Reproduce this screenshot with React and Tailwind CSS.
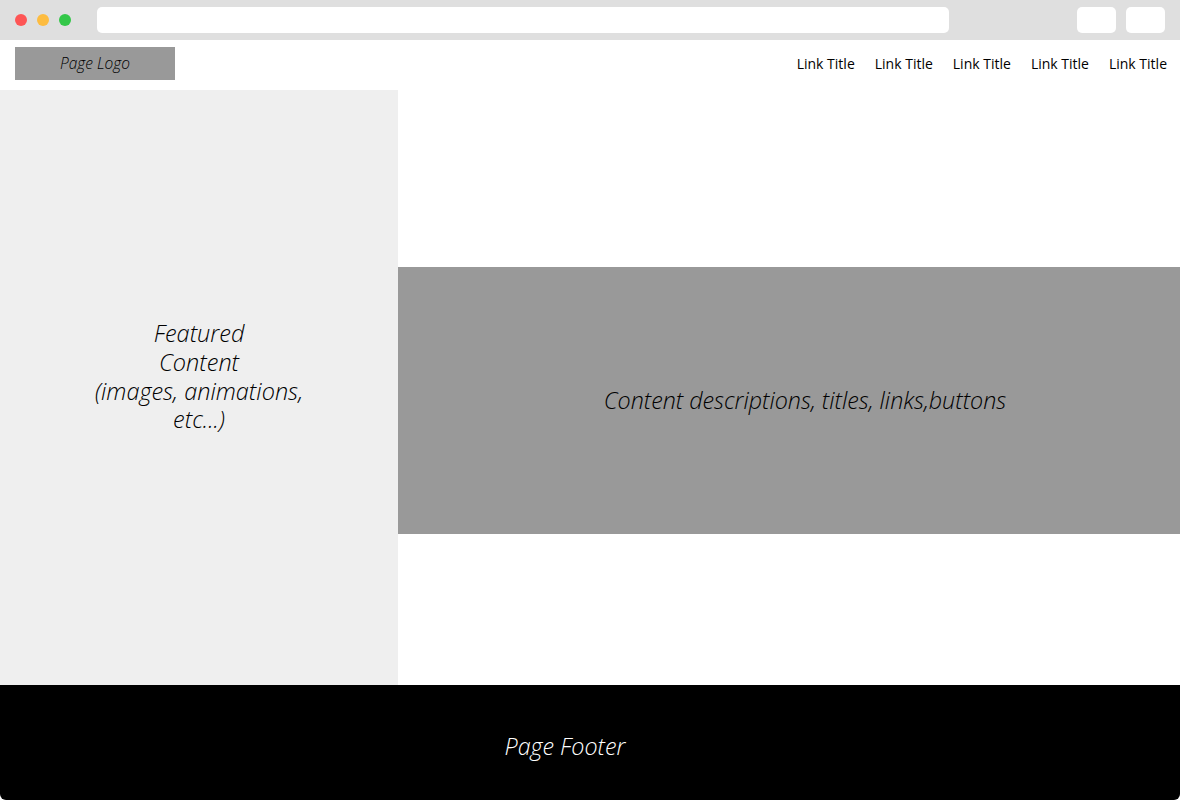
export default function App() {
    const links = ['Link Title', 'Link Title', 'Link Title', 'Link Title', 'Link Title'];

    return (
        <div className="w-[1180px] h-[800px] bg-white flex flex-col overflow-hidden rounded-b-[6px]" style={{ fontFamily: '"Open Sans", sans-serif' }}>
            {/* Browser chrome */}
            <div className="h-[40px] shrink-0 bg-[#dfdfdf] flex items-center">
                <div className="flex items-center gap-[10px] pl-[15px]">
                    <span className="w-[12px] h-[12px] rounded-full bg-[#fe5555]" />
                    <span className="w-[12px] h-[12px] rounded-full bg-[#fdbc40]" />
                    <span className="w-[12px] h-[12px] rounded-full bg-[#33c748]" />
                </div>
                <div className="ml-[26px] w-[852px] h-[26px] rounded-[5px] bg-white" />
                <div className="ml-auto flex gap-[10px] pr-[15px]">
                    <div className="w-[39px] h-[26px] rounded-[5px] bg-white" />
                    <div className="w-[39px] h-[26px] rounded-[5px] bg-white" />
                </div>
            </div>

            {/* Nav */}
            <div className="h-[50px] shrink-0 flex items-start pt-[7px] pl-[15px] pr-[13px]">
                <div className="w-[160px] h-[33px] bg-[#999999] flex items-center justify-center text-[15.5px] font-light italic text-black">
                    Page Logo
                </div>
                <nav className="ml-auto flex gap-[20px] h-[33px] items-center text-[14px] text-black">
                    {links.map((l, i) => (
                        <a key={i} href="#" className="leading-none">{l}</a>
                    ))}
                </nav>
            </div>

            {/* Main */}
            <div className="h-[595px] shrink-0 flex">
                <div className="w-[398px] bg-[#efefef] flex items-center justify-center pb-[22px]">
                    <p className="text-center text-[23.5px] leading-[28.7px] font-light italic text-black w-[240px]">
                        Featured<br />Content<br />(images, animations, etc...)
                    </p>
                </div>
                <div className="flex-1 flex flex-col justify-center pt-[26px]">
                    <div className="h-[267px] bg-[#999999] flex items-center justify-center pl-[32px]">
                        <p className="text-[23.3px] font-light italic text-black">Content descriptions, titles, links,buttons</p>
                    </div>
                </div>
            </div>

            {/* Footer */}
            <div className="flex-1 bg-black flex items-center justify-center pr-[50px] pt-[8px]">
                <p className="text-[23.3px] font-light italic text-white">Page Footer</p>
            </div>
        </div>
    );
}
